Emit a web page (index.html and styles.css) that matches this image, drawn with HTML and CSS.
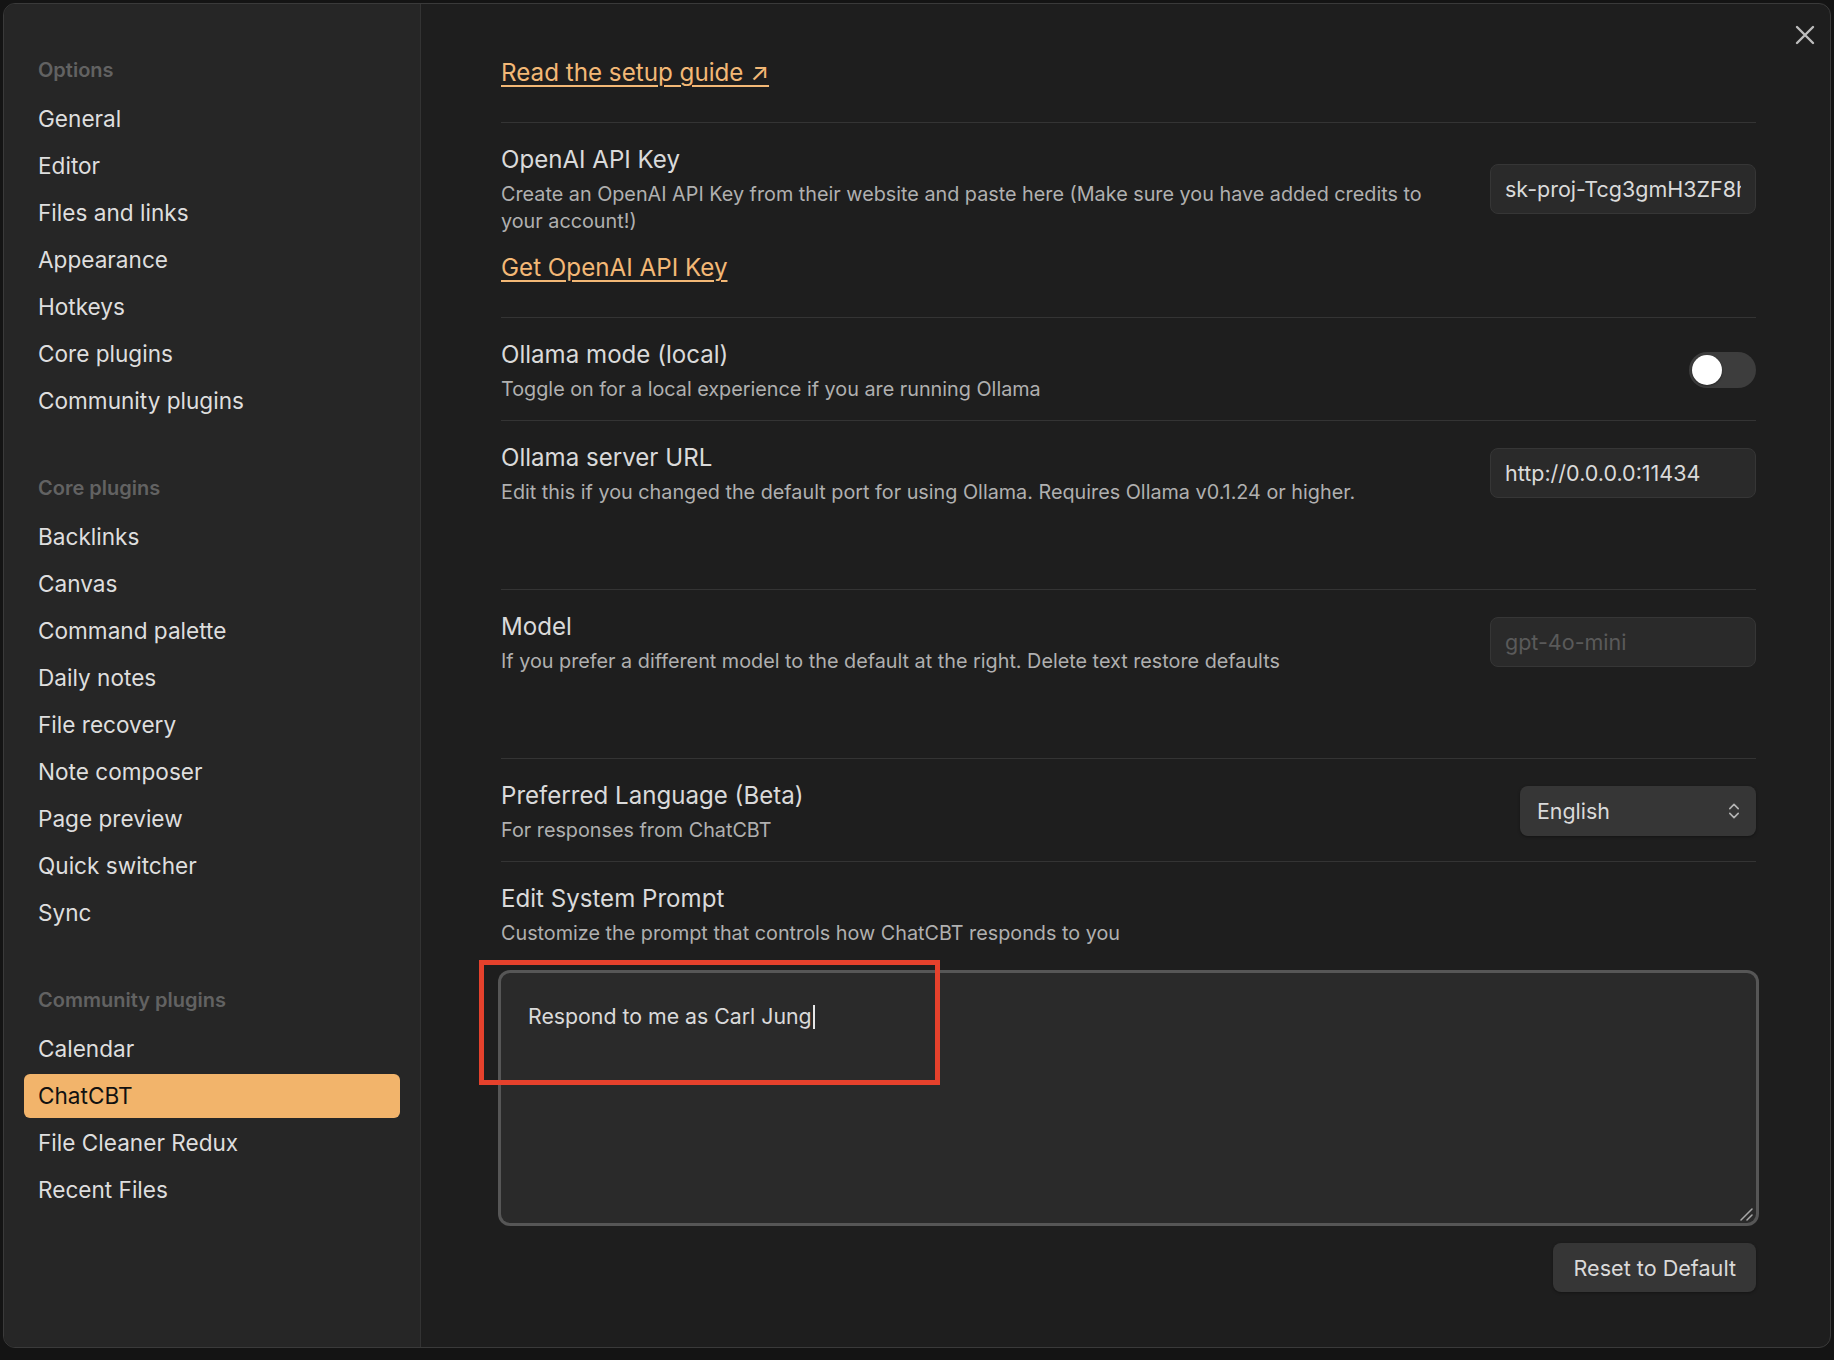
FILE: index.html
```html
<!DOCTYPE html>
<html lang="en">
<head>
<meta charset="utf-8">
<title>Settings — ChatCBT</title>
<link rel="stylesheet" href="styles.css">
</head>
<body>
<div class="modal">
  <aside class="sidebar">
    <div class="nav-group">
      <div class="nav-header">Options</div>
      <div class="nav-item">General</div>
      <div class="nav-item">Editor</div>
      <div class="nav-item">Files and links</div>
      <div class="nav-item">Appearance</div>
      <div class="nav-item">Hotkeys</div>
      <div class="nav-item">Core plugins</div>
      <div class="nav-item">Community plugins</div>
    </div>
    <div class="nav-group">
      <div class="nav-header">Core plugins</div>
      <div class="nav-item">Backlinks</div>
      <div class="nav-item">Canvas</div>
      <div class="nav-item">Command palette</div>
      <div class="nav-item">Daily notes</div>
      <div class="nav-item">File recovery</div>
      <div class="nav-item">Note composer</div>
      <div class="nav-item">Page preview</div>
      <div class="nav-item">Quick switcher</div>
      <div class="nav-item">Sync</div>
    </div>
    <div class="nav-group">
      <div class="nav-header">Community plugins</div>
      <div class="nav-item">Calendar</div>
      <div class="nav-item is-active">ChatCBT</div>
      <div class="nav-item">File Cleaner Redux</div>
      <div class="nav-item">Recent Files</div>
    </div>
  </aside>

  <main class="content">
    <div class="guide"><a class="link">Read the setup guide ↗</a></div>

    <div class="setting-item">
      <div class="setting-info">
        <div class="setting-name">OpenAI API Key</div>
        <div class="setting-desc">Create an OpenAI API Key from their website and paste here (Make sure you have added credits to your account!)</div>
      </div>
      <div class="setting-control">
        <input class="text-input" type="text" value="sk-proj-Tcg3gmH3ZF8hT3BlbkFJx9Qw">
      </div>
    </div>
    <div class="key-link"><a class="link">Get OpenAI API Key</a></div>

    <div class="setting-item">
      <div class="setting-info">
        <div class="setting-name">Ollama mode (local)</div>
        <div class="setting-desc">Toggle on for a local experience if you are running Ollama</div>
      </div>
      <div class="setting-control">
        <div class="toggle"><div class="knob"></div></div>
      </div>
    </div>

    <div class="setting-item tall">
      <div class="setting-info">
        <div class="setting-name">Ollama server URL</div>
        <div class="setting-desc">Edit this if you changed the default port for using Ollama. Requires Ollama v0.1.24 or higher.</div>
      </div>
      <div class="setting-control">
        <input class="text-input" type="text" value="http://0.0.0.0:11434">
      </div>
    </div>

    <div class="setting-item tall">
      <div class="setting-info">
        <div class="setting-name">Model</div>
        <div class="setting-desc">If you prefer a different model to the default at the right. Delete text restore defaults</div>
      </div>
      <div class="setting-control">
        <input class="text-input" type="text" placeholder="gpt-4o-mini">
      </div>
    </div>

    <div class="setting-item">
      <div class="setting-info">
        <div class="setting-name">Preferred Language (Beta)</div>
        <div class="setting-desc">For responses from ChatCBT</div>
      </div>
      <div class="setting-control">
        <div class="dropdown">
          <span>English</span>
          <svg class="chevrons" width="12" height="18" viewBox="0 0 12 18"><path d="M1.8 6.6 L6 2.4 L10.2 6.6 M1.8 11.4 L6 15.6 L10.2 11.4" fill="none" stroke="#b4b4b4" stroke-width="1.6" stroke-linecap="round" stroke-linejoin="round"/></svg>
        </div>
      </div>
    </div>

    <div class="setting-item plain">
      <div class="setting-info">
        <div class="setting-name">Edit System Prompt</div>
        <div class="setting-desc">Customize the prompt that controls how ChatCBT responds to you</div>
      </div>
    </div>

    <div class="prompt-wrap">
      <div class="prompt-box">Respond to me as Carl Jung<span class="caret"></span>
        <svg class="resizer" width="14" height="14" viewBox="0 0 14 14"><path d="M2 13 L13 2 M8 13 L13 8" stroke="#a8a8a8" stroke-width="1.5" stroke-linecap="round"/></svg>
      </div>
      <div class="annotation"></div>
    </div>

    <div class="actions"><button class="btn">Reset to Default</button></div>
  </main>

  <button class="close" aria-label="Close">
    <svg width="20" height="20" viewBox="0 0 20 20"><path d="M2 2 L18 18 M18 2 L2 18" stroke="#bdbdbd" stroke-width="2.4" stroke-linecap="round"/></svg>
  </button>
</div>
</body>
</html>
```

FILE: styles.css
```css
* { box-sizing: border-box; }

html, body {
  margin: 0;
  height: 1360px;
  overflow: hidden;
}

body {
  background: #141414;
  padding: 3px 3px 0 3px;
  font-family: "Inter", "Noto Sans", sans-serif;
  color: #dadada;
}

.modal {
  position: relative;
  display: flex;
  height: 1345px;
  border: 1px solid #3a3a3a;
  border-radius: 12px;
  overflow: hidden;
  background: #1e1e1e;
}

/* ---------- sidebar ---------- */
.sidebar {
  width: 417px;
  flex: 0 0 417px;
  background: #262626;
  border-right: 1px solid #333333;
  padding: 51px 20px 0 20px;
}

.nav-group {
  display: flex;
  flex-direction: column;
  gap: 3px;
}

.nav-group + .nav-group { margin-top: 50px; }

.nav-header {
  height: 30px;
  line-height: 30px;
  padding-left: 14px;
  margin-bottom: 9px;
  font-size: 20px;
  font-weight: 600;
  color: #626262;
}

.nav-item {
  height: 44px;
  line-height: 44px;
  padding-left: 14px;
  font-size: 22.6px;
  color: #dedede;
  border-radius: 6px;
  white-space: nowrap;
}

.nav-item.is-active {
  background: #f2b46b;
  color: #111111;
}

/* ---------- content ---------- */
.content {
  flex: 1;
  min-width: 0;
  padding: 53px 74px 0 80px;
}

.link {
  color: #f3b876;
  text-decoration: underline;
  text-decoration-thickness: 2px;
  text-underline-offset: 4px;
  font-size: 24.2px;
  cursor: pointer;
}

.guide {
  height: 32px;
  line-height: 32px;
  margin-bottom: 33px;
}

.key-link {
  height: 32px;
  line-height: 32px;
  margin-bottom: 33px;
}

.setting-item {
  display: flex;
  align-items: center;
  border-top: 1px solid #343434;
  padding: 19px 0 17px 0;
}

.setting-item.tall { padding-bottom: 83px; }

.setting-info {
  flex: 0 1 950px;
  margin-right: auto;
}

.setting-name {
  padding-top: 2px;
  font-size: 24.1px;
  line-height: 32px;
  color: #dadada;
}

.setting-desc {
  margin-top: 5px;
  font-size: 19.8px;
  line-height: 27px;
  color: #b0b0b0;
}

.setting-control {
  display: flex;
  justify-content: flex-end;
  flex: 0 0 auto;
}

.text-input {
  width: 266px;
  height: 50px;
  padding: 0 14px;
  background: #2a2a2a;
  border: 1px solid #363636;
  border-radius: 8px;
  font-family: inherit;
  font-size: 21.5px;
  color: #dadada;
  outline: none;
}

.text-input::placeholder { color: #5a5a5a; }

.toggle {
  width: 67px;
  height: 36px;
  border-radius: 18px;
  background: #3d3d3d;
  padding: 3px;
}

.knob {
  width: 30px;
  height: 30px;
  border-radius: 50%;
  background: #ffffff;
  box-shadow: 0 1px 2px rgba(0,0,0,0.4);
}

.dropdown {
  width: 236px;
  height: 50px;
  display: flex;
  align-items: center;
  justify-content: space-between;
  padding: 0 16px 0 17px;
  background: #363636;
  border-radius: 8px;
  box-shadow: 0 1px 3px rgba(0,0,0,0.35);
  font-size: 21.4px;
  color: #dadada;
}

/* ---------- prompt ---------- */
.prompt-wrap {
  position: relative;
  margin-top: 9px;
}

.prompt-box {
  position: relative;
  height: 250px;
  background: #2a2a2a;
  border-radius: 9px;
  box-shadow: 0 0 0 3px #565656;
  padding: 28px 27px;
  font-size: 21.3px;
  line-height: 30px;
  color: #dadada;
}

.caret {
  display: inline-block;
  width: 2px;
  height: 24px;
  background: #e6e6e6;
  vertical-align: -5px;
  margin-left: 1px;
}

.resizer {
  position: absolute;
  right: 3px;
  bottom: 2px;
}

.annotation {
  position: absolute;
  left: -22px;
  top: -13px;
  width: 461px;
  height: 125px;
  border: 5px solid #e5412c;
  pointer-events: none;
}

.actions {
  display: flex;
  justify-content: flex-end;
  margin-top: 20px;
}

.btn {
  height: 49px;
  padding: 0 20px;
  background: #363636;
  border: none;
  border-radius: 8px;
  box-shadow: 0 1px 3px rgba(0,0,0,0.35);
  font-family: inherit;
  font-size: 21.6px;
  color: #dadada;
}

.close {
  position: absolute;
  top: 19px;
  right: 13px;
  width: 24px;
  height: 24px;
  padding: 2px;
  border: none;
  background: none;
}
```
